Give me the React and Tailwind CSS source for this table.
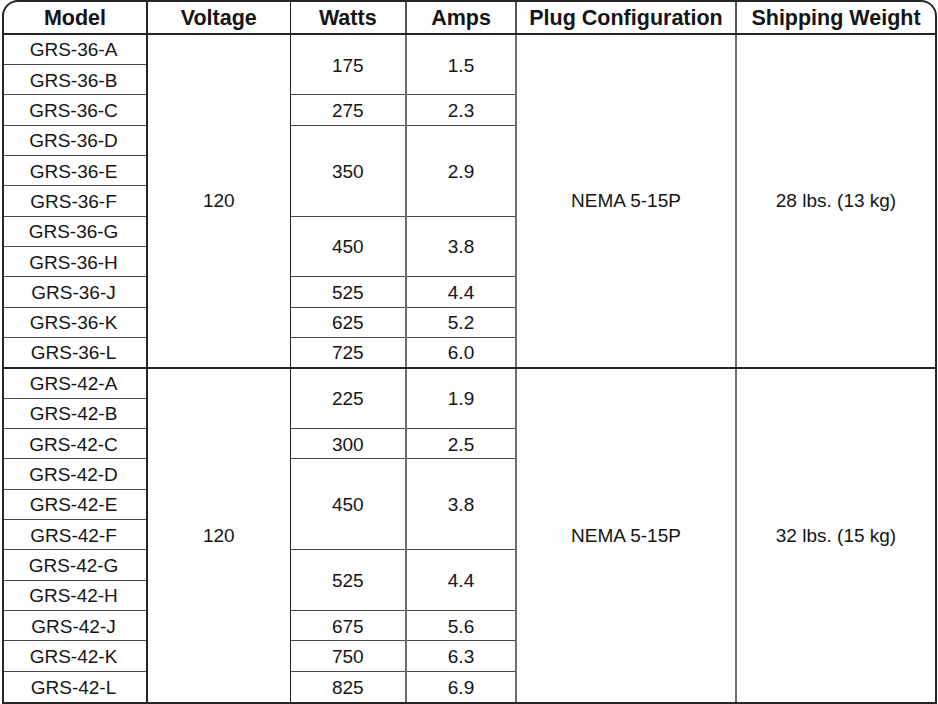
import React from "react";

const groups = [
  {
    prefix: "GRS-36",
    weight: "28 lbs. (13 kg)",
    specs: [
      { watts: "175", amps: "1.5", span: 2 },
      { watts: "275", amps: "2.3", span: 1 },
      { watts: "350", amps: "2.9", span: 3 },
      { watts: "450", amps: "3.8", span: 2 },
      { watts: "525", amps: "4.4", span: 1 },
      { watts: "625", amps: "5.2", span: 1 },
      { watts: "725", amps: "6.0", span: 1 },
    ],
  },
  {
    prefix: "GRS-42",
    weight: "32 lbs. (15 kg)",
    specs: [
      { watts: "225", amps: "1.9", span: 2 },
      { watts: "300", amps: "2.5", span: 1 },
      { watts: "450", amps: "3.8", span: 3 },
      { watts: "525", amps: "4.4", span: 2 },
      { watts: "675", amps: "5.6", span: 1 },
      { watts: "750", amps: "6.3", span: 1 },
      { watts: "825", amps: "6.9", span: 1 },
    ],
  },
];

const letters = ["A", "B", "C", "D", "E", "F", "G", "H", "J", "K", "L"];

const App = () => {
  return (
    <div className="w-[938px] h-[704px] bg-white overflow-hidden">
      <div
        className="ml-[2px] w-[935px] border-2 border-[#262626] rounded-t-[16px] overflow-hidden"
        style={{ fontFamily: '"Liberation Sans", Arial, sans-serif' }}
      >
        <table className="w-[931px] table-fixed border-collapse text-[#151515]">
          <colgroup>
            <col className="w-[143px]" />
            <col className="w-[143px]" />
            <col className="w-[116px]" />
            <col className="w-[110px]" />
            <col className="w-[220px]" />
            <col className="w-[199px]" />
          </colgroup>
          <thead>
            <tr className="h-[32px] text-[21.5px] leading-[24px] font-bold">
              <th className="border-b-2 border-r-2 border-[#262626] pt-[1px]">Model</th>
              <th className="border-b-2 border-r border-[#262626] pt-[1px]">Voltage</th>
              <th className="border-b-2 border-r-2 border-b-[#262626] border-r-[#555] pt-[1px]">Watts</th>
              <th className="border-b-2 border-r-2 border-b-[#262626] border-r-[#555] pt-[1px]">Amps</th>
              <th className="border-b-2 border-r-2 border-b-[#262626] border-r-[#555] pt-[1px]">Plug Configuration</th>
              <th className="border-b-2 border-[#262626] pt-[1px]">Shipping Weight</th>
            </tr>
          </thead>
          <tbody className="text-[19px] leading-[21px]">
            {groups.map((g, gi) => {
              const last = gi === groups.length - 1;
              const groupBorder = last ? "" : "border-b-2 border-b-[#262626]";
              let rowIdx = 0;
              const specStarts = {};
              g.specs.forEach((s) => {
                specStarts[rowIdx] = s;
                rowIdx += s.span;
              });
              return letters.map((l, i) => {
                const isLast = i === letters.length - 1;
                const spec = specStarts[i];
                const rowBottom = isLast
                  ? groupBorder
                  : "border-b border-b-[#4a4a4a]";
                const specEndsGroup = spec && i + spec.span === letters.length;
                const specBottom = specEndsGroup
                  ? groupBorder
                  : "border-b border-b-[#4a4a4a]";
                return (
                  <tr key={`${gi}-${l}`} className="h-[30.35px]">
                    <td className={`text-center pr-[3px] pt-[1px] border-r-2 border-r-[#262626] ${rowBottom}`}>
                      {g.prefix}-{l}
                    </td>
                    {i === 0 && (
                      <td
                        rowSpan={11}
                        className={`text-center border-r border-r-[#262626] ${groupBorder}`}
                      >
                        120
                      </td>
                    )}
                    {spec && (
                      <td
                        rowSpan={spec.span}
                        className={`text-center pt-[1px] border-r-2 border-r-[#6e6e6e] ${specBottom}`}
                      >
                        {spec.watts}
                      </td>
                    )}
                    {spec && (
                      <td
                        rowSpan={spec.span}
                        className={`text-center pt-[1px] border-r-2 border-r-[#6e6e6e] ${specBottom}`}
                      >
                        {spec.amps}
                      </td>
                    )}
                    {i === 0 && (
                      <td
                        rowSpan={11}
                        className={`text-center border-r-2 border-r-[#6e6e6e] ${groupBorder}`}
                      >
                        NEMA 5-15P
                      </td>
                    )}
                    {i === 0 && (
                      <td rowSpan={11} className={`text-center ${groupBorder}`}>
                        {g.weight}
                      </td>
                    )}
                  </tr>
                );
              });
            })}
          </tbody>
        </table>
      </div>
    </div>
  );
};

export default App;
